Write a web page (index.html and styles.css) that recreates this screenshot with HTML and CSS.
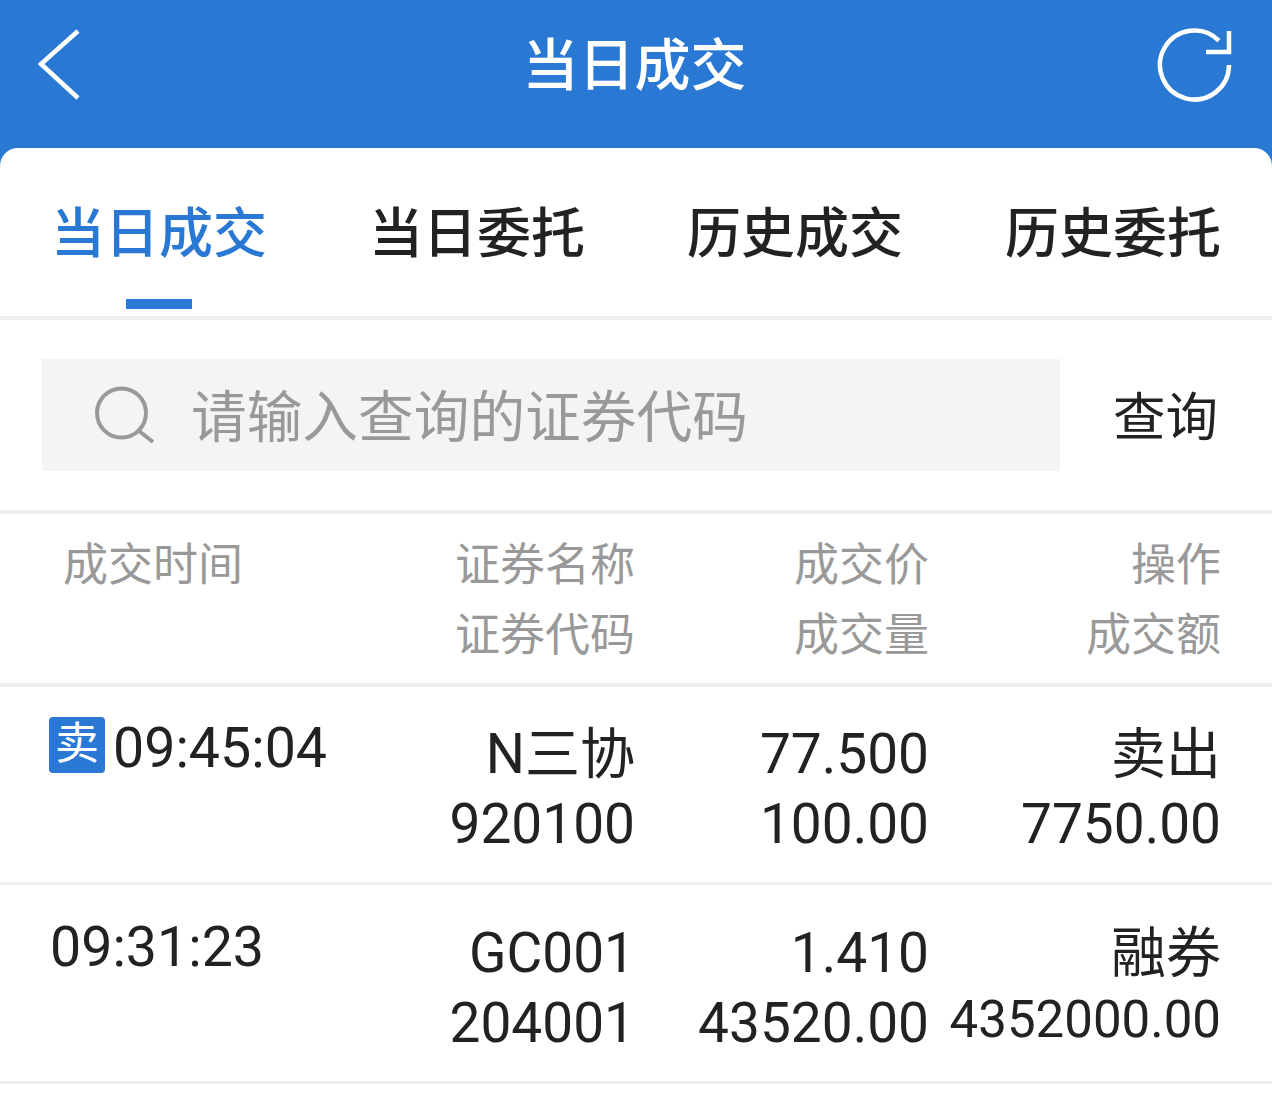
FILE: index.html
```html
<!DOCTYPE html>
<html lang="zh-CN">
<head>
<meta charset="utf-8">
<title>当日成交</title>
<link rel="stylesheet" href="styles.css">
</head>
<body>
<div class="app">
  <header class="topbar">
    <svg class="icon-back" width="44" height="72" viewBox="0 0 44 72"><path d="M41 2 L4 35 L41 69" fill="none" stroke="#fff" stroke-width="4.500"/></svg>
    <h1 class="title">当日成交</h1>
    <svg class="icon-refresh" width="78" height="78" viewBox="0 0 78 78"><path d="M73 39A34.500 34.500 0 1 1 62.900 14.600" fill="none" stroke="#fff" stroke-width="4.500"/><path d="M50 26 H73 V5" fill="none" stroke="#fff" stroke-width="4.500"/></svg>
  </header>
  <main class="card">
    <nav class="tabs">
      <a class="tab tab-active">当日成交</a>
      <a class="tab">当日委托</a>
      <a class="tab">历史成交</a>
      <a class="tab">历史委托</a>
    </nav>
    <section class="search">
      <div class="search-box">
        <svg class="icon-search" width="62" height="60" viewBox="0 0 62 60"><circle cx="29.500" cy="28" r="24.500" fill="none" stroke="#999" stroke-width="4"/><path d="M47 46 L61 57" fill="none" stroke="#999" stroke-width="4"/></svg>
        <span class="placeholder">请输入查询的证券代码</span>
      </div>
      <span class="search-btn">查询</span>
    </section>
    <div class="row row-head">
      <div class="cell cell-time">成交时间</div>
      <div class="cell">证券名称<br>证券代码</div>
      <div class="cell">成交价<br>成交量</div>
      <div class="cell">操作<br>成交额</div>
    </div>
    <div class="row row-data">
      <div class="cell cell-time"><span class="badge">卖</span><span class="time">09:45:04</span></div>
      <div class="cell">N三协<br>920100</div>
      <div class="cell">77.500<br>100.00</div>
      <div class="cell">卖出<br>7750.00</div>
    </div>
    <div class="row row-data">
      <div class="cell cell-time"><span class="time">09:31:23</span></div>
      <div class="cell">GC001<br>204001</div>
      <div class="cell">1.410<br>43520.00</div>
      <div class="cell">融券<br><span class="small-num">4352000.00</span></div>
    </div>
  </main>
</div>
</body>
</html>
```
FILE: styles.css
```css
* { box-sizing: border-box; }
html, body { margin: 0; padding: 0; background: #fff; }
body {
  font-family: Roboto, "Noto Sans CJK SC", sans-serif;
  color: #222;
}
.app { width: 1272px; height: 1120px; overflow: hidden; background: #2878d4; }
.topbar {
  height: 148px;
  position: relative;
  display: flex;
  justify-content: center;
  padding-right: 3px;
  color: #fff;
}
.title {
  margin: 0;
  font-size: 56px;
  font-weight: 500;
  line-height: 130px;
  margin-top: -4px;
  font-family: "Noto Sans CJK SC", sans-serif;
}
.icon-back { position: absolute; left: 37px; top: 29px; }
.icon-refresh { position: absolute; left: 1156px; top: 26px; }
.card {
  background: #fff;
  border-radius: 18px 18px 0 0;
  height: 972px;
}
.tabs {
  height: 172px;
  border-bottom: 4px solid #eee;
  display: grid;
  grid-template-columns: repeat(4, 318px);
}
.tab {
  text-align: center;
  font-family: "Noto Sans CJK SC", sans-serif;
  font-size: 54px;
  font-weight: 500;
  line-height: 164px;
  position: relative;
}
.tab-active { color: #2878d4; }
.tab-active::after {
  content: "";
  position: absolute;
  left: 126px;
  bottom: 7px;
  width: 66px;
  height: 10px;
  background: #2878d4;
}
.search {
  height: 194px;
  border-bottom: 4px solid #eee;
  display: flex;
  align-items: flex-start;
  padding: 39px 0 0 42px;
}
.search-box {
  width: 1018px;
  height: 112px;
  background: #f4f4f4;
  display: flex;
  align-items: center;
  padding-left: 50px;
}
.icon-search { margin-right: 37px; }
.placeholder {
  font-family: "Noto Sans CJK SC", sans-serif;
  font-size: 55.700px;
  color: #999;
  position: relative;
  top: -3px;
}
.search-btn {
  font-family: "Noto Sans CJK SC", sans-serif;
  font-size: 52.500px;
  line-height: 108px;
  margin-left: 53px;
}
.row {
  display: grid;
  grid-template-columns: 280px 305px 294px 292px;
  padding-left: 50px;
  border-bottom: 3px solid #eee;
  text-align: right;
}
.row-head {
  height: 173px;
  border-bottom-width: 4px;
  padding-top: 17px;
  font-size: 45px;
  line-height: 70px;
  color: #999;
}
.row-data {
  height: 198px;
  padding-top: 32px;
  font-size: 55px;
  line-height: 70px;
}
.row-data + .row-data { padding-top: 33px; height: 199px; }
.cell { white-space: nowrap; }
.cell-time { text-align: left; }
.row-head .cell-time { padding-left: 13px; }
.row-data .cell-time {
  display: flex;
  align-items: center;
  height: 56px;
  margin-top: -2px;
}
.badge {
  width: 56px;
  height: 56px;
  margin-left: -1px;
  margin-right: 8px;
  background: #2878d4;
  border-radius: 4px;
  color: #fff;
  font-size: 44px;
  line-height: 54px;
  text-align: center;
}
.time { font-size: 55.500px; line-height: 56px; position: relative; top: 4px; }
.small-num { font-size: 51px; position: relative; top: -5px; }
```
